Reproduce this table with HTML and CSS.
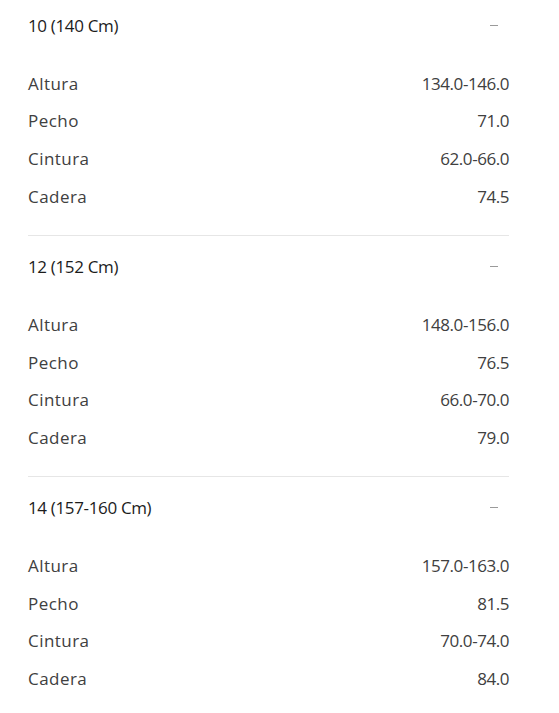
FILE: index.html
```html
<!DOCTYPE html>
<html lang="es">
<head>
<meta charset="utf-8">
<link rel="stylesheet" href="styles.css">
</head>
<body>
<div class="sizes">
  <section class="size">
    <div class="size-head"><span class="size-title">10 (140 Cm)</span><span class="minus"></span></div>
    <div class="rows">
      <div class="row"><span class="label">Altura</span><span class="value">134.0-146.0</span></div>
      <div class="row"><span class="label">Pecho</span><span class="value">71.0</span></div>
      <div class="row"><span class="label">Cintura</span><span class="value">62.0-66.0</span></div>
      <div class="row"><span class="label">Cadera</span><span class="value">74.5</span></div>
    </div>
  </section>
  <section class="size">
    <div class="size-head"><span class="size-title">12 (152 Cm)</span><span class="minus"></span></div>
    <div class="rows">
      <div class="row"><span class="label">Altura</span><span class="value">148.0-156.0</span></div>
      <div class="row"><span class="label">Pecho</span><span class="value">76.5</span></div>
      <div class="row"><span class="label">Cintura</span><span class="value">66.0-70.0</span></div>
      <div class="row"><span class="label">Cadera</span><span class="value">79.0</span></div>
    </div>
  </section>
  <section class="size last">
    <div class="size-head"><span class="size-title">14 (157-160 Cm)</span><span class="minus"></span></div>
    <div class="rows">
      <div class="row"><span class="label">Altura</span><span class="value">157.0-163.0</span></div>
      <div class="row"><span class="label">Pecho</span><span class="value">81.5</span></div>
      <div class="row"><span class="label">Cintura</span><span class="value">70.0-74.0</span></div>
      <div class="row"><span class="label">Cadera</span><span class="value">84.0</span></div>
    </div>
  </section>
</div>
</body>
</html>
```
FILE: styles.css
```css
html, body {
  margin: 0;
  padding: 0;
  background: #fff;
}
body {
  font-family: "Open Sans", "Liberation Sans", sans-serif;
  font-size: 17px;
  color: #404040;
}
.sizes {
  padding: 0 50px 0 28px;
}
.size {
  padding-bottom: 20px;
  border-bottom: 1px solid #e6e6e6;
  margin-bottom: 5px;
}
.size.last {
  border-bottom: none;
}
.size-head {
  height: 51px;
  display: flex;
  align-items: center;
  justify-content: space-between;
}
.size-title {
  color: #1c1c1c;
  letter-spacing: -0.35px;
}
.minus {
  width: 8px;
  height: 1px;
  background: #9a9a9a;
  margin-right: 11px;
}
.rows {
  margin-top: 13.5px;
}
.row {
  height: 37.667px;
  display: flex;
  align-items: center;
  justify-content: space-between;
}
.label {
  letter-spacing: 0.45px;
}
.value {
  letter-spacing: -0.45px;
}
```
